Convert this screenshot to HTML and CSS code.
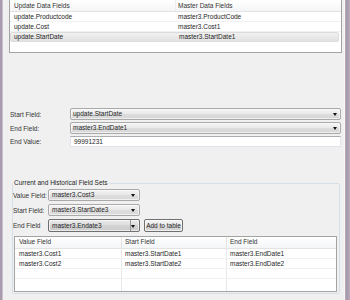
FILE: index.html
```html
<!DOCTYPE html>
<html>
<head>
<meta charset="utf-8">
<link rel="stylesheet" href="styles.css">
</head>
<body>
<div class="window">
  <div class="edge-left"></div>
  <div class="main">
    <div class="list top-list">
      <div class="row head"><div class="cell">Update Data Fields</div><div class="cell">Master Data Fields</div></div>
      <div class="row"><div class="cell">update.Productcode</div><div class="cell">master3.ProductCode</div></div>
      <div class="row"><div class="cell">update.Cost</div><div class="cell">master3.Cost1</div></div>
      <div class="row sel"><div class="cell">update.StartDate</div><div class="cell">master3.StartDate1</div></div>
      <div class="row empty"></div>
    </div>

    <div class="form">
      <label class="lbl">Start Field:</label>
      <div class="combo">update.StartDate<span class="arrow"></span></div>
      <label class="lbl">End Field:</label>
      <div class="combo">master3.EndDate1<span class="arrow"></span></div>
      <label class="lbl">End Value:</label>
      <div class="input">99991231</div>
    </div>

    <fieldset class="group">
      <legend>Current and Historical Field Sets</legend>
      <div class="set-form">
        <label class="lbl">Value Field:</label>
        <div class="combo small">master3.Cost3<span class="arrow"></span></div>
        <div></div>
        <label class="lbl">Start Field:</label>
        <div class="combo small">master3.StartDate3<span class="arrow"></span></div>
        <div></div>
        <label class="lbl">End Field</label>
        <div class="combo small focus">master3.Endate3<span class="btnpart"><span class="arrow"></span></span></div>
        <button class="btn">Add to table</button>
      </div>
      <div class="list bottom-list">
        <div class="row head"><div class="cell">Value Field</div><div class="cell">Start Field</div><div class="cell">End Field</div></div>
        <div class="row"><div class="cell">master3.Cost1</div><div class="cell">master3.StartDate1</div><div class="cell">master3.EndDate1</div></div>
        <div class="row"><div class="cell">master3.Cost2</div><div class="cell">master3.StartDate2</div><div class="cell">master3.EndDate2</div></div>
        <div class="row"><div class="cell"></div><div class="cell"></div><div class="cell"></div></div>
        <div class="row last"><div class="cell"></div><div class="cell"></div><div class="cell"></div></div>
      </div>
    </fieldset>
  </div>
  <div class="edge-right"></div>
</div>
</body>
</html>
```

FILE: styles.css
```css
* { box-sizing: border-box; }
html, body {
  margin: 0;
  padding: 0;
  background: #f0f0f0;
}
body {
  font-family: "Liberation Sans", Arial, sans-serif;
  font-size: 6.5px;
  color: #1e1e1e;
}
.window {
  display: flex;
  width: 350px;
  height: 300px;
  overflow: hidden;
}
.edge-left {
  width: 3px;
  background: #a89bad;
  border-right: 1px solid #c9c0cc;
}
.edge-right {
  width: 6px;
  background: linear-gradient(to right, #f7f7f7 0, #f7f7f7 1px, #b7adbb 1px, #a497aa 3px, #b9aebf 6px);
}
.main {
  flex: 1;
  padding-left: 6px;
  display: flex;
  flex-direction: column;
}

/* list views */
.list {
  background: #fff;
  border: 1px solid #a3a3a3;
}
.row {
  display: grid;
  height: 10px;
  border-bottom: 1px solid #f1f1f1;
  line-height: 9px;
}
.row .cell {
  padding-left: 3px;
  white-space: nowrap;
  overflow: hidden;
}
.row.head {
  height: 12px;
  line-height: 11px;
  background: linear-gradient(#ffffff, #f4f5f7);
  border-bottom: 1px solid #e3e3e3;
  color: #333;
}
.top-list {
  width: 333px;
  margin-top: -1px;
}
.top-list .row {
  grid-template-columns: 165px 1fr;
}
.top-list .row .cell:first-child { padding-left: 4px; }
.top-list .row.head .cell + .cell { border-left: 1px solid #eeeeee; padding-left: 2px; }
.top-list .row.sel {
  background: linear-gradient(#f0f0f0, #e2e2e2);
  border: 1px solid #dcdcdc;
  border-radius: 2px;
  margin-right: 2px;
  line-height: 8px;
}
.top-list .row.sel .cell:first-child { padding-left: 3px; }
.top-list .row.empty {
  border-bottom: none;
}

/* form */
.form {
  margin-top: 55px;
  display: grid;
  grid-template-columns: 60px 271px;
  grid-template-rows: 12px 12px 11px;
  row-gap: 2px;
  margin-left: 1px;
}
.lbl {
  color: #333;
  display: flex;
  align-items: center;
  white-space: nowrap;
}
.combo {
  position: relative;
  border: 1px solid #a9a9a9;
  border-radius: 2px;
  background: linear-gradient(#f4f4f4, #ebebeb 45%, #dddddd 50%, #d6d6d6);
  box-shadow: inset 0 0 0 1px rgba(255,255,255,0.6);
  padding-left: 2px;
  line-height: 10px;
  white-space: nowrap;
  color: #1e1e1e;
}
.arrow {
  position: absolute;
  right: 3px;
  top: 50%;
  margin-top: -1px;
  width: 0;
  height: 0;
  border-left: 2.5px solid transparent;
  border-right: 2.5px solid transparent;
  border-top: 3px solid #111;
}
.input {
  background: #fff;
  border: 1px solid #e2e3ea;
  border-top-color: #abadb3;
  padding-left: 3px;
  line-height: 9px;
}

/* group */
.group {
  margin: 32px 0 0 3px;
  width: 328px;
  border: 1px solid #d5dfe5;
  border-radius: 2px;
  padding: 0 0 1px 0;
  min-width: 0;
}
.group legend {
  padding: 0 1px;
  line-height: 8px;
  color: #1e1e1e;
}
.set-form {
  margin-top: 2px;
  display: grid;
  grid-template-columns: 35px 92px 43px;
  grid-template-rows: 12px 12px 13px;
  row-gap: 3px;
}
.combo.small {
  padding-left: 3px;
  background: linear-gradient(#f3f3f3, #e9e9e9 45%, #dedede 50%, #d9d9d9);
}
.combo.small .arrow { right: 4px; }
.combo.focus {
  border-color: #707070;
  background: linear-gradient(#e9e9e9, #dedede 45%, #d2d2d2 50%, #cccccc);
  line-height: 11px;
}
.btnpart {
  position: absolute;
  right: 0;
  top: 0;
  bottom: 0;
  width: 9px;
  border-left: 1px solid #9a9a9a;
}
.btnpart .arrow { right: 2px; }
.btn {
  margin: 0 0 0 4px;
  padding: 0;
  width: 39px;
  height: 13px;
  font: inherit;
  color: #1e1e1e;
  border: 1px solid #707070;
  border-radius: 2px;
  background: linear-gradient(#f2f2f2, #ebebeb 45%, #dddddd 50%, #cfcfcf);
  box-shadow: inset 0 0 0 1px rgba(255,255,255,0.7);
  white-space: nowrap;
}
.bottom-list {
  margin: 4px 0 0 1px;
  width: 323px;
}
.bottom-list .row {
  grid-template-columns: 106px 105px 1fr;
}
.bottom-list .row .cell + .cell { border-left: 1px solid #e8e8e8; }
.bottom-list .row.head .cell + .cell { border-left: 1px solid #e3e3e3; }
.bottom-list .row .cell:first-child { padding-left: 4px; }
.bottom-list .row.head { height: 12px; line-height: 10px; }
.bottom-list .row.last { height: 12px; border-bottom: none; }
```
